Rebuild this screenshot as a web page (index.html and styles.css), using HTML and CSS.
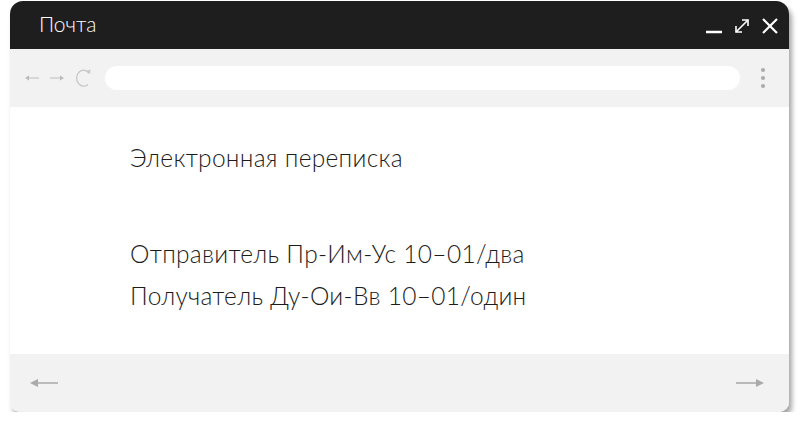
FILE: index.html
```html
<!DOCTYPE html>
<html lang="ru">
<head>
  <meta charset="UTF-8" />
  <meta name="viewport" content="width=device-width, initial-scale=1.0" />
  <title>Почта</title>
  <link rel="stylesheet" href="styles.css">
</head>
<body>
  <div class="window">
    <div class="titlebar">
      <div class="title">Почта</div>
      <div class="win-controls">
        <svg class="ctl" width="18" height="18" viewBox="0 0 18 18">
          <line x1="1" y1="15" x2="17" y2="15" stroke="#fff" stroke-width="2.4" />
        </svg>
        <svg class="ctl" width="18" height="18" viewBox="0 0 18 18">
          <line x1="3" y1="15" x2="15" y2="3" stroke="#fff" stroke-width="1.6" />
          <polyline points="9,3 15,3 15,9" fill="none" stroke="#fff" stroke-width="1.6" />
          <polyline points="3,9 3,15 9,15" fill="none" stroke="#fff" stroke-width="1.6" />
        </svg>
        <svg class="ctl" width="18" height="18" viewBox="0 0 18 18">
          <line x1="2" y1="2" x2="16" y2="16" stroke="#fff" stroke-width="2.2" />
          <line x1="16" y1="2" x2="2" y2="16" stroke="#fff" stroke-width="2.2" />
        </svg>
      </div>
    </div>

    <div class="toolbar">
      <div class="nav">
        <svg width="16" height="10" viewBox="0 0 16 10">
          <line x1="4" y1="5" x2="15" y2="5" stroke="#bbb" stroke-width="1.2" />
          <polygon points="1,5 5,2.5 5,7.5" fill="#bbb" />
        </svg>
        <svg width="16" height="10" viewBox="0 0 16 10">
          <line x1="1" y1="5" x2="12" y2="5" stroke="#bbb" stroke-width="1.2" />
          <polygon points="15,5 11,2.5 11,7.5" fill="#bbb" />
        </svg>
        <svg width="18" height="22" viewBox="0 0 18 22">
          <path d="M15 6 A7 8 0 1 0 14 17.5" fill="none" stroke="#c8c8c8" stroke-width="1.3" />
          <polygon points="12,4 16.5,2.5 16,7" fill="#c8c8c8" />
        </svg>
      </div>
      <div class="address"></div>
      <div class="menu">
        <span></span><span></span><span></span>
      </div>
    </div>

    <div class="content">
      <p class="subject">Электронная переписка</p>
      <p>Отправитель Пр-Им-Ус 10–01/два</p>
      <p>Получатель Ду-Ои-Вв 10–01/один</p>
    </div>

    <div class="footer">
      <svg width="30" height="12" viewBox="0 0 30 12">
        <line x1="7" y1="6" x2="29" y2="6" stroke="#aaa" stroke-width="1.6" />
        <polygon points="1,6 9,2 9,10" fill="#aaa" />
      </svg>
      <svg width="30" height="12" viewBox="0 0 30 12">
        <line x1="1" y1="6" x2="23" y2="6" stroke="#aaa" stroke-width="1.6" />
        <polygon points="29,6 21,2 21,10" fill="#aaa" />
      </svg>
    </div>
  </div>
</body>
</html>
```

FILE: styles.css
```css
body {
  margin: 0;
  padding: 1px 0 0 10px;
  background: #fff;
  font-family: "Lato", "Noto Sans", sans-serif;
}
.window {
  width: 779px;
  border-radius: 13px 13px 10px 10px;
  overflow: hidden;
  box-shadow: 3px 5px 5px rgba(0, 0, 0, 0.35);
}
.titlebar {
  height: 48px;
  background: #1e1e1e;
  display: flex;
  align-items: center;
  justify-content: space-between;
  padding: 0 10px 0 29px;
}
.title {
  color: #fff;
  font-size: 21px;
  font-weight: 300;
  margin-top: -3px;
}
.win-controls {
  display: flex;
  gap: 10px;
  margin-top: 2px;
}
.toolbar {
  height: 58px;
  background: #f2f2f2;
  display: flex;
  align-items: center;
  padding: 0 24px 0 14px;
}
.nav {
  display: flex;
  align-items: center;
  gap: 9px;
  width: 81px;
}
.address {
  flex: 1;
  height: 24px;
  background: #fff;
  border-radius: 12px;
  margin: 0 21px 0 0;
}
.menu {
  display: flex;
  flex-direction: column;
  gap: 4px;
}
.menu span {
  width: 4px;
  height: 4px;
  border-radius: 50%;
  background: #aaa;
}
.content {
  background: #fff;
  height: 247px;
  padding: 0 0 0 120px;
  color: #1c1c1c;
  font-size: 24.5px;
  font-weight: 300;
  letter-spacing: 0.3px;
}
.content p {
  margin: 0;
  line-height: 42px;
}
.content .subject {
  padding-top: 30px;
  margin-bottom: 54px;
}
.footer {
  height: 58px;
  background: #f2f2f2;
  display: flex;
  align-items: center;
  justify-content: space-between;
  padding: 0 24px 0 19px;
}
```
